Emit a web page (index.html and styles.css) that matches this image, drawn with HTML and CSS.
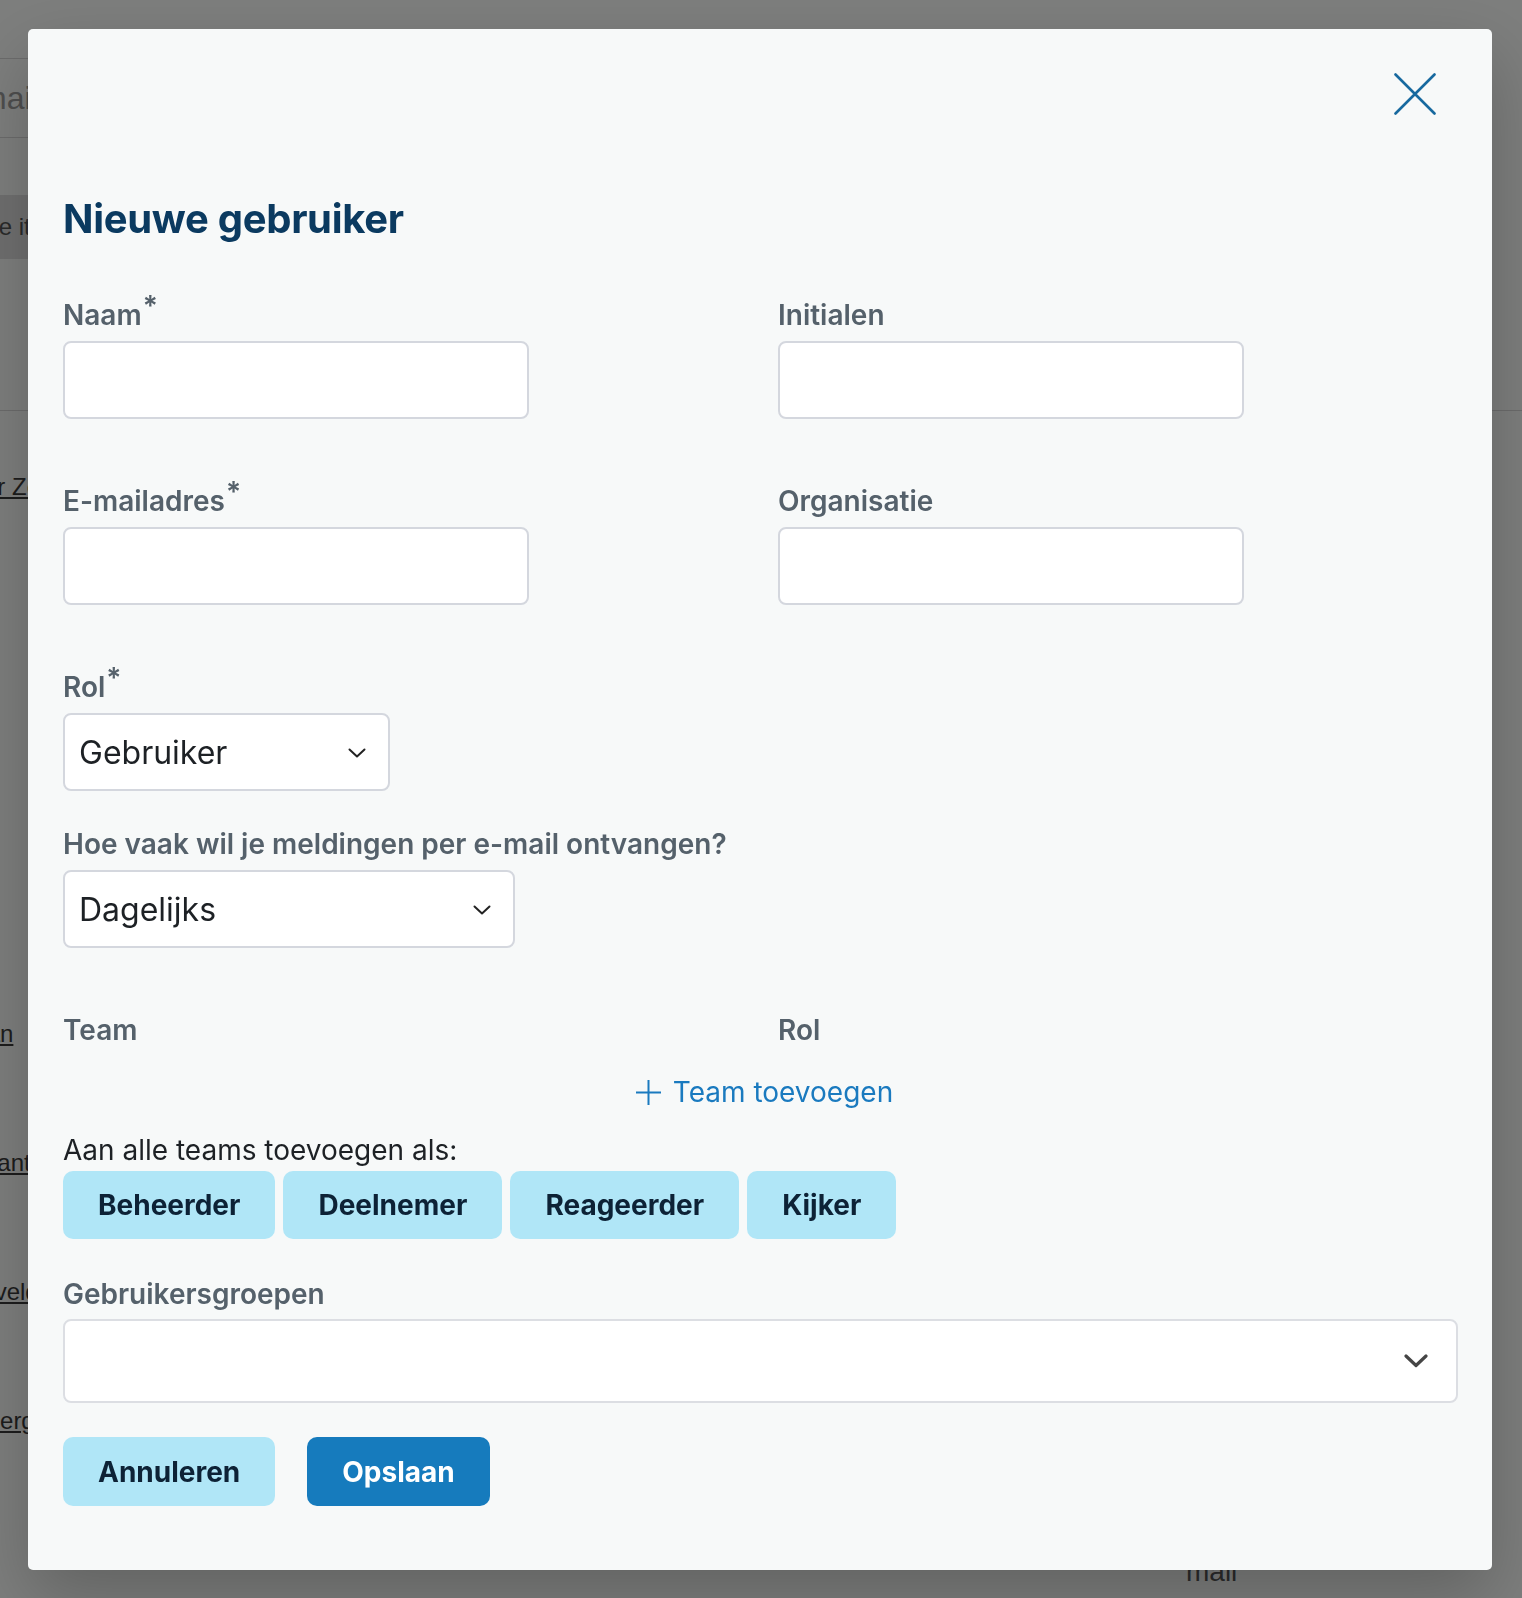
FILE: index.html
```html
<!DOCTYPE html>
<html lang="nl">
  <head>
    <meta charset="UTF-8" />
    <meta name="viewport" content="width=device-width, initial-scale=1.0" />
    <title>Gebruikers</title>
    <link rel="stylesheet" href="styles.css">
  </head>
  <body>
    <!-- user overview, stays behind the dialog -->
    <div class="page">
      <div class="search"><span class="clip">E-mail</span></div>
      <div class="bulk"><span class="clip">Alle item</span></div>
      <div class="divider"></div>
      <ul class="links">
        <li><a class="clip" href="#">Peter Zee</a></li>
      </ul>
      <ul class="links links-lower">
        <li><a class="clip" href="#">Johan</a></li>
        <li><a class="clip" href="#">Li Brant</a></li>
        <li><a class="clip" href="#">Alle velden</a></li>
        <li><a class="clip" href="#">Bo Berg</a></li>
      </ul>
      <div class="page-foot">mail</div>
    </div>

    <div class="backdrop">
      <div class="modal" role="dialog" aria-labelledby="modalTitle">
        <div class="modal-head">
          <button class="close" aria-label="Sluiten">
            <svg width="42" height="42" viewBox="0 0 42 42">
              <path d="M1.5 1.5L40.5 40.5M40.5 1.5L1.5 40.5" />
            </svg>
          </button>
        </div>

        <h2 id="modalTitle">Nieuwe gebruiker</h2>

        <form class="user-form">
          <div class="grid-2">
            <div class="field">
              <label for="naam">Naam<sup>*</sup></label>
              <input type="text" id="naam" />
            </div>
            <div class="field">
              <label for="initialen">Initialen</label>
              <input type="text" id="initialen" />
            </div>
            <div class="field">
              <label for="email">E-mailadres<sup>*</sup></label>
              <input type="email" id="email" />
            </div>
            <div class="field">
              <label for="organisatie">Organisatie</label>
              <input type="text" id="organisatie" />
            </div>
          </div>

          <div class="field field-role">
            <label for="rol">Rol<sup>*</sup></label>
            <div class="select select-role">
              <select id="rol">
                <option>Gebruiker</option>
                <option>Beheerder</option>
              </select>
              <svg class="chevron" width="18" height="10" viewBox="0 0 18 10">
                <path d="M1.5 1.5L9 8.5L16.5 1.5" />
              </svg>
            </div>
          </div>

          <div class="field field-mail">
            <label for="frequentie">Hoe vaak wil je meldingen per e-mail ontvangen?</label>
            <div class="select select-mail">
              <select id="frequentie">
                <option>Dagelijks</option>
                <option>Wekelijks</option>
                <option>Nooit</option>
              </select>
              <svg class="chevron" width="18" height="10" viewBox="0 0 18 10">
                <path d="M1.5 1.5L9 8.5L16.5 1.5" />
              </svg>
            </div>
          </div>

          <div class="grid-2 team-head">
            <span class="label">Team</span>
            <span class="label">Rol</span>
          </div>

          <div class="team-add">
            <button type="button" class="link-btn">
              <svg width="25" height="25" viewBox="0 0 25 25">
                <path d="M12.5 0V25M0 12.5H25" />
              </svg>
              Team toevoegen
            </button>
          </div>

          <p class="all-teams">Aan alle teams toevoegen als:</p>
          <div class="chips">
            <button type="button" class="btn btn-light">Beheerder</button>
            <button type="button" class="btn btn-light">Deelnemer</button>
            <button type="button" class="btn btn-light">Reageerder</button>
            <button type="button" class="btn btn-light">Kijker</button>
          </div>

          <div class="field field-groups">
            <span class="label">Gebruikersgroepen</span>
            <div class="multi">
              <svg width="24" height="14" viewBox="0 0 24 14">
                <path d="M2 2L12 11.5L22 2" />
              </svg>
            </div>
          </div>

          <div class="actions">
            <button type="button" class="btn btn-light">Annuleren</button>
            <button type="submit" class="btn btn-primary">Opslaan</button>
          </div>
        </form>
      </div>
    </div>
  </body>
</html>
```

FILE: styles.css
```css
:root {
  --page-bg: #fafcfa;
  --modal-bg: #f7f9f9;
  --title: #0b3a60;
  --label: #55616b;
  --text: #1d2125;
  --border: #d4d7de;
  --primary: #167bbd;
  --link: #1a7abf;
  --light: #b0e6f7;
  --light-text: #0d2236;
}

* {
  margin: 0;
  padding: 0;
  box-sizing: border-box;
}

body {
  background: var(--page-bg);
  font-family: "Liberation Sans", Arial, sans-serif;
  height: 1598px;
  overflow: hidden;
}

/* page behind the dialog */
.page {
  margin-left: -52px;
  color: #3a3a3a;
  font-size: 24px;
}

.clip {
  display: inline-block;
  width: 80px;
  overflow: hidden;
  white-space: nowrap;
  vertical-align: top;
}

.search {
  margin-top: 58px;
  width: 900px;
  height: 80px;
  line-height: 78px;
  border-top: 1px solid #d7d7d7;
  border-bottom: 1px solid #d7d7d7;
  font-size: 32px;
  color: #9c9c9c;
}

.bulk {
  margin-top: 57px;
  width: 260px;
  height: 64px;
  line-height: 64px;
  background: #dedede;
  color: #555;
  padding-left: 24px;
}

.divider {
  margin-top: 151px;
  border-top: 1px solid #d7d7d7;
}

.links {
  list-style: none;
}

.links li {
  height: 129px;
  padding-top: 62px;
}

.links a {
  color: #3a3a3a;
}

.links-lower {
  margin-top: 418px;
}

.page-foot {
  padding-left: 1238px;
  margin-top: 82px;
  font-size: 28px;
  color: #555;
}

/* dialog */
.backdrop {
  position: fixed;
  inset: 0;
  background: rgba(0, 0, 0, 0.5);
}

.modal {
  margin: 29px 0 0 28px;
  width: 1464px;
  background: var(--modal-bg);
  border-radius: 5px;
  padding: 0 34px 64px 35px;
  box-shadow: 0 28px 70px rgba(0, 0, 0, 0.22);
  font-family: Inter, "Noto Sans", sans-serif;
}

.modal-head {
  display: flex;
  justify-content: flex-end;
  padding: 44px 22px 0 0;
}

.close {
  width: 42px;
  height: 42px;
  background: none;
  border: none;
  cursor: pointer;
}

.close svg {
  display: block;
  fill: none;
  stroke: #17699f;
  stroke-width: 2.6;
  stroke-linecap: round;
}

h2 {
  margin-top: 79px;
  font-size: 40px;
  line-height: 50px;
  font-weight: 700;
  letter-spacing: -0.3px;
  color: var(--title);
}

.user-form {
  margin-top: 54px;
  display: flex;
  flex-direction: column;
}

.grid-2 {
  display: grid;
  grid-template-columns: 1fr 1fr;
  column-gap: 35px;
  row-gap: 65px;
}

.field {
  display: flex;
  flex-direction: column;
  gap: 9px;
}

.field label,
.label {
  font-size: 28px;
  line-height: 34px;
  font-weight: 600;
  color: var(--label);
}

sup {
  font-size: 28px;
  line-height: 0;
  vertical-align: 9px;
  margin-left: 1px;
}

.field input {
  width: 466px;
  height: 78px;
  border: 2px solid var(--border);
  border-radius: 8px;
  background: #fff;
  padding: 0 15px;
  font: 400 32px Inter, sans-serif;
  color: var(--text);
}

.field-role {
  margin-top: 65px;
}

.field-mail {
  margin-top: 36px;
}

.select {
  position: relative;
}

.select-role {
  width: 327px;
}

.select-mail {
  width: 452px;
}

.select select {
  appearance: none;
  width: 100%;
  height: 78px;
  border: 2px solid var(--border);
  border-radius: 8px;
  background: #fff;
  padding: 0 60px 0 14px;
  font: 400 32px Inter, sans-serif;
  color: var(--text);
}

.chevron {
  position: absolute;
  right: 24px;
  top: 35px;
  fill: none;
  stroke: #222;
  stroke-width: 2;
  stroke-linecap: round;
  stroke-linejoin: round;
  pointer-events: none;
}

.team-head {
  margin-top: 65px;
}

.team-add {
  margin-top: 28px;
  text-align: center;
}

.link-btn {
  display: inline-flex;
  align-items: center;
  gap: 12px;
  margin-left: 8px;
  background: none;
  border: none;
  color: var(--link);
  font: 400 28px/34px Inter, sans-serif;
  cursor: pointer;
}

.link-btn svg {
  fill: none;
  stroke: var(--link);
  stroke-width: 2;
}

.all-teams {
  margin-top: 24px;
  font-size: 28px;
  line-height: 34px;
  color: var(--text);
}

.chips {
  margin-top: 4px;
  display: flex;
  gap: 8px;
}

.btn {
  height: 68px;
  padding: 0 35px;
  border: none;
  border-radius: 10px;
  font: 700 28px/34px Inter, sans-serif;
  cursor: pointer;
}

.btn-light {
  background: var(--light);
  color: var(--light-text);
}

.btn-primary {
  background: var(--primary);
  color: #fff;
}

.field-groups {
  margin-top: 38px;
  gap: 8px;
}

.multi {
  height: 84px;
  border: 2px solid #dcdee3;
  border-radius: 8px;
  background: #fff;
  display: flex;
  justify-content: flex-end;
  align-items: center;
  padding-right: 28px;
}

.multi svg {
  fill: none;
  stroke: #454545;
  stroke-width: 3.2;
  stroke-linecap: round;
  stroke-linejoin: round;
}

.actions {
  margin-top: 34px;
  display: flex;
  gap: 32px;
}

.actions .btn {
  height: 69px;
}
```
